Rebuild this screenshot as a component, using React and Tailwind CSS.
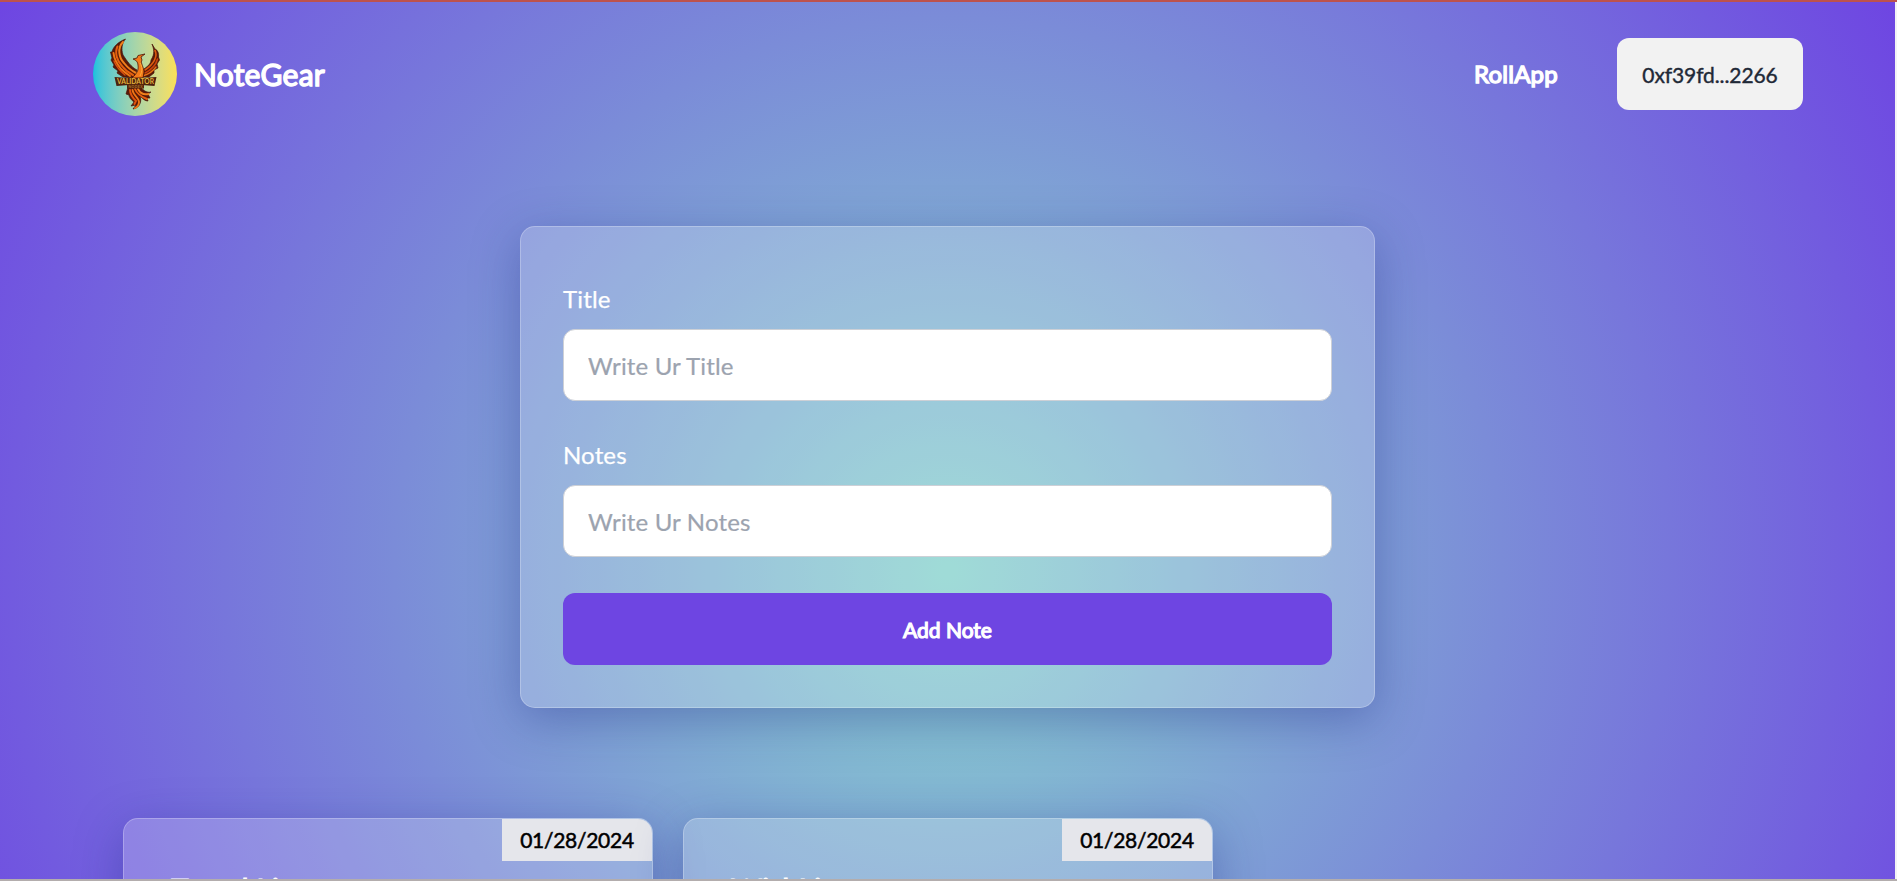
function Phoenix() {
  return (
    <svg viewBox="93 32 84 84" className="h-[84px] w-[84px]" aria-hidden="true">
      <g fill="#5a1a08" stroke="#4a1408" strokeWidth="0.7" strokeLinejoin="round">
        <path d="M125.5 39 C118 42 113 47 112 52 L110.5 52 L112 58 L111 60 L114 65 L113 67 L118 71 L117 73 L123 77 L134 78 L137 70 C131 67 127 61 123 55 C121 49 122 43 125.5 39Z" />
        <path d="M152 44 L155 49 C158 50 159 54 158.5 57 L159.5 60 L157 64 L158 68 L154 70 L154 73 L149 77 L141 77 L142 70 C148 67 151 63 151 60 C155 54 154 49 152 44Z" />
        <path d="M128 87 L141 87 C143 91 148 93 151 92 L148 94 L150 98 L147 98 L148 101 C145 101 143 99 140 96 C142 101 140 108 133 109 L136 105 L131 106 L134 102 C131 100 129 97 129 95 L126 94Z" />
      </g>
      <g fill="none" strokeLinecap="round" strokeWidth="2">
        <path stroke="#f0801b" d="M123 42 C117 48 119 58 124 63 C128 68 132 71 136 73" />
        <path stroke="#e5600f" d="M117.500 46.500 C114.500 53 117 61 122 66 C125 70 129 73 133 75" />
        <path stroke="#ee7615" d="M113.500 53 C114 59 117 64 121 69 C124 72 127 74 130 76" />
        <path stroke="#d94d0d" d="M114 61 C116 66 119 70 125 75" strokeWidth="1.400" />
        <path stroke="#dd5a0e" d="M155 50.500 C158 56 154 64 145 70" strokeWidth="1.600" />
        <path stroke="#c9420b" d="M157.500 59 C156 65 151 70 145 73" strokeWidth="1.600" />
        <path stroke="#e87014" d="M156 67 C153 71 149 74 144 75.500" strokeWidth="1.400" />
      </g>
      <path
        fill="#f27a1a"
        stroke="#4a1408"
        strokeWidth="0.8"
        strokeLinejoin="round"
        d="M133 59 L137 58 L138 55.500 L145 54 L141 57 L142 60 C140 63 144 67 144 72 L143 78 L132 78 C136 74 139 71 138 65 C138 62 136 60 133 59Z"
      />
      <path d="M140 63 C142.500 67 142.500 71 140 76" fill="none" stroke="#ffae3a" strokeWidth="1" />
      <g fill="none" strokeLinecap="round" strokeWidth="1.900">
        <path stroke="#f0801b" d="M138 89 C140 93 144 95 148.500 94" />
        <path stroke="#e5600f" d="M135 89 C137 94 142 97 147 99" />
        <path stroke="#ee7615" d="M132.500 90 C133 95 139 98 139 102 C139 105 137 107 135 108" />
        <path stroke="#e0530e" d="M130 90 C130 95 133 98 136 101 L134.500 104" />
      </g>
      <path d="M114.500 77 Q135 79 156.500 77 L154.500 86 Q135 84 116.500 86Z" fill="#4c210d" />
      <rect x="127" y="84" width="17" height="4.500" fill="#56250d" />
      <text
        x="135.500"
        y="83.800"
        textAnchor="middle"
        textLength="37"
        lengthAdjust="spacingAndGlyphs"
        fill="#e2b23c"
        className="font-['Lato',sans-serif] text-[6.5px] font-bold"
      >
        VALIDATOR
      </text>
      <text
        x="135.500"
        y="88"
        textAnchor="middle"
        textLength="14"
        fill="#a9722a"
        className="font-['Lato',sans-serif] text-[3.5px] font-bold"
      >
        NODEX
      </text>
    </svg>
  );
}

function Field({ label, placeholder }) {
  return (
    <label className="flex flex-col">
      <span className="flex h-[60px] items-center text-[24px] leading-[30px] tracking-[0.15px] text-white [-webkit-text-stroke:0.25px_currentColor]">
        {label}
      </span>
      <input
        placeholder={placeholder}
        className="h-[72px] w-full rounded-xl border border-[#cdd0d6] bg-white px-6 text-[24px] tracking-[0.16px] text-gray-700 outline-none placeholder:text-[#9ca3af] placeholder:[-webkit-text-stroke:0.2px_currentColor]"
      />
    </label>
  );
}

function NoteCard({ title, date }) {
  return (
    <article className="h-[300px] w-[530px] shrink-0 overflow-hidden rounded-[15px] border border-white/25 bg-white/20 shadow-[0_12px_48px_0_rgba(31,38,135,0.37)]">
      <div className="flex justify-end">
        <time className="flex h-[42px] w-[150px] items-center justify-center bg-[#e5e6eb] text-[21px] tracking-[-0.28px] text-black [-webkit-text-stroke:0.5px_currentColor]">
          {date}
        </time>
      </div>
      <h2 className="mt-[7px] pl-[47px] text-[30px] leading-[42px] text-white [-webkit-text-stroke:1px_currentColor]">
        {title}
      </h2>
    </article>
  );
}

export default function App() {
  return (
    <div className="flex h-[881px] w-[1897px] flex-col overflow-hidden font-['Lato',sans-serif]">
      <div className="h-[2px] shrink-0 bg-[#bd524d]" />
      <div className="flex min-h-0 flex-1">
        <div className="flex w-[1895px] flex-col overflow-hidden bg-[radial-gradient(circle_1107px_at_948px_569px,#88d3ce_0%,#6e45e2_100%)]">
          <header className="flex h-[144px] shrink-0 items-center justify-between pr-[92px] pl-[93px]">
            <div className="flex items-center gap-[17px]">
              <div className="h-[84px] w-[84px] overflow-hidden rounded-full bg-linear-to-r from-[#12c2de] to-[#fce055]">
                <Phoenix />
              </div>
              <span className="text-[30px] tracking-[0.25px] text-white [-webkit-text-stroke:1.4px_currentColor]">
                NoteGear
              </span>
            </div>
            <nav className="flex items-center gap-[59px]">
              <a className="text-[24px] tracking-[0.25px] text-white [-webkit-text-stroke:1.4px_currentColor]">RollApp</a>
              <button className="h-[72px] w-[186px] rounded-xl bg-[#f2f2f2] pt-0.5 text-[21px] tracking-[-0.1px] text-[#1f2937] [-webkit-text-stroke:0.4px_currentColor]">
                0xf39fd...2266
              </button>
            </nav>
          </header>
          <main className="flex flex-col">
            <form className="mt-20 ml-[520px] flex h-[482px] w-[855px] flex-col rounded-[15px] border border-white/25 bg-white/20 px-[42px] pt-[42px] shadow-[0_12px_48px_0_rgba(31,38,135,0.37)]">
              <Field label="Title" placeholder="Write Ur Title" />
              <div className="h-6" />
              <Field label="Notes" placeholder="Write Ur Notes" />
              <button
                type="button"
                className="mt-9 h-[72px] rounded-xl bg-[#6e45e2] pt-0.5 text-[21px] text-white [-webkit-text-stroke:1.2px_currentColor]"
              >
                Add Note
              </button>
            </form>
            <section className="mt-[110px] ml-[123px] flex gap-[30px]">
              <NoteCard title="Travel List" date="01/28/2024" />
              <NoteCard title="WishList" date="01/28/2024" />
            </section>
          </main>
        </div>
        <div className="w-[2px] bg-[#f3f3f5]" />
      </div>
      <div className="h-[2px] shrink-0 bg-[#b3adad]" />
    </div>
  );
}
